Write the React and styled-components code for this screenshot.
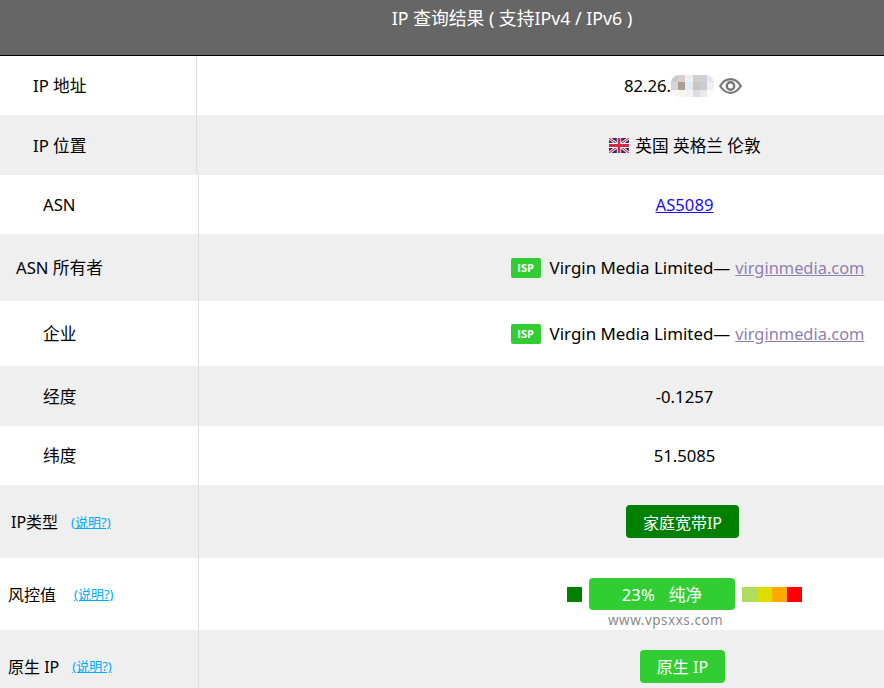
import React from "react";
import styled, { createGlobalStyle } from "styled-components";

const Global = createGlobalStyle`
  html, body { margin: 0; padding: 0; height: 688px; overflow: hidden; background: #fff; }
  body { font-family: "Noto Sans", "Noto Sans CJK SC", sans-serif; font-size: 16.7px; color: #000; }
`;

const Page = styled.div`
  width: 884px;
`;

const Header = styled.header`
  height: 55px;
  box-sizing: content-box;
  background: #666;
  border-bottom: 1px solid #000;
  color: #fff;
  font-size: 17.8px;
  line-height: 24px;
  padding-left: 140px;
  text-align: center;
  > span { display: block; padding-top: 6px; }
`;

const Row = styled.div`
  display: grid;
  grid-template-columns: ${(p) => p.$labelWidth}px 1fr;
  height: ${(p) => p.$height}px;
  background: ${(p) => (p.$shade ? "#efefef" : "#fff")};
`;

const Label = styled.div`
  display: flex;
  align-items: center;
  padding-left: ${(p) => p.$indent}px;
  padding-bottom: 1px;
  border-right: 1px solid #ddd;
  font-size: ${(p) => p.$size || 16.7}px;
  white-space: nowrap;
`;

const HelpLink = styled.a`
  margin-left: ${(p) => p.$gap}px;
  font-size: 13px;
  color: #00aaff;
  text-decoration: underline;
`;

const Value = styled.div`
  position: relative;
  display: flex;
  align-items: center;
  justify-content: center;
  padding-left: ${(p) => p.$pad || 286}px;
  white-space: nowrap;
`;

const PlainLink = styled.a`
  color: #1a0dee;
  text-decoration: underline;
`;

const Company = styled.span`
  font-size: 16.9px;
`;

const SiteLink = styled.a`
  margin-left: 5px;
  color: #8f7fb0;
  font-size: 16.4px;
  text-decoration: underline;
`;

const IspBadge = styled.span`
  width: 30px;
  height: 20px;
  margin-right: 9px;
  border-radius: 2px;
  background: #32cd32;
  color: #fff;
  font-family: "Open Sans", sans-serif;
  font-size: 11px;
  font-weight: 700;
  line-height: 20px;
  text-align: center;
`;

const Pill = styled.span`
  display: inline-flex;
  align-items: center;
  justify-content: center;
  width: ${(p) => p.$width}px;
  height: 33px;
  border-radius: 4px;
  background: ${(p) => p.$bg};
  color: #fff;
  font-size: 16px;
`;

const Square = styled.span`
  width: 15px;
  height: 15px;
  background: ${(p) => p.$bg};
`;

const Meter = styled.div`
  display: flex;
  align-items: center;
`;

const Scale = styled.div`
  display: flex;
  margin-left: 7px;
`;

const RiskBar = styled(Pill)`
  margin-left: 7px;
  height: 32px;
  gap: 14px;
  font-size: 16.7px;
`;

const Watermark = styled.span`
  position: absolute;
  left: 409px;
  top: 53px;
  color: #8a8a8a;
  font-size: 13.5px;
  letter-spacing: 0.5px;
`;

const Inline = styled.span`
  display: inline-flex;
  align-items: center;
  gap: ${(p) => p.$gap}px;
`;

const MosaicBox = styled.svg`
  display: block;
  border-radius: 8px;
`;

const Flag = () => (
  <svg width="20" height="15" viewBox="0 0 60 40" preserveAspectRatio="none">
    <rect width="60" height="40" fill="#1f2f70" />
    <path d="M0 0L60 40M60 0L0 40" stroke="#fff" strokeWidth="8" />
    <path d="M0 0L60 40M60 0L0 40" stroke="#d42a44" strokeWidth="3" />
    <path d="M30 0V40M0 20H60" stroke="#fff" strokeWidth="13" />
    <path d="M30 0V40M0 20H60" stroke="#d42a44" strokeWidth="8" />
  </svg>
);

const Eye = () => (
  <svg width="23" height="16" viewBox="0 0 23 16" fill="none" stroke="#787878">
    <path d="M1.200 8C4 3.500 7.500 1.200 11.500 1.200S19 3.500 21.800 8C19 12.500 15.500 14.800 11.500 14.800S4 12.500 1.200 8Z" strokeWidth="2.200" />
    <circle cx="11.500" cy="8" r="3.700" strokeWidth="2.400" />
  </svg>
);

const mosaic = [
  ["#c8ccd2", "#d8d0c8", "#ebf0f5", "#d5cec8", "#ccd0d8", "#e6e6ea"],
  ["#d4d4d6", "#ac9f92", "#e4ecf3", "#c8c4bf", "#c8cdd5", "#f0f0f2"],
  ["#f6f6f6", "#f7f5f2", "#f1f3f6", "#dcdcdc", "#e9e9e9", "#fbfbfb"],
];

const Mosaic = () => (
  <MosaicBox width="43" height="22" viewBox="0 0 6 3" shapeRendering="crispEdges">
    {mosaic.map((row, y) =>
      row.map((c, x) => <rect key={`${x}-${y}`} x={x} y={y} width="1" height="1" fill={c} />)
    )}
  </MosaicBox>
);

const CompanyValue = () => (
  <Value $pad={292}>
    <IspBadge>ISP</IspBadge>
    <Company>Virgin Media Limited—</Company>
    <SiteLink href="#">virginmedia.com</SiteLink>
  </Value>
);

export default function App() {
  return (
    <Page>
      <Global />
      <Header><span>IP 查询结果 ( 支持IPv4 / IPv6 )</span></Header>

      <Row $labelWidth={197} $height={59}>
        <Label $indent={33}>IP 地址</Label>
        <Value $pad={285}><Inline $gap={5}><Inline $gap={0}>82.26.<Mosaic /></Inline><Eye /></Inline></Value>
      </Row>
      <Row $labelWidth={197} $height={60} $shade>
        <Label $indent={33}>IP 位置</Label>
        <Value $pad={289}><Inline $gap={6}><Flag />英国 英格兰 伦敦</Inline></Value>
      </Row>
      <Row $labelWidth={199} $height={59}>
        <Label $indent={43}>ASN</Label>
        <Value><PlainLink href="#">AS5089</PlainLink></Value>
      </Row>
      <Row $labelWidth={199} $height={67} $shade>
        <Label $indent={16}>ASN 所有者</Label>
        <CompanyValue />
      </Row>
      <Row $labelWidth={199} $height={65}>
        <Label $indent={43}>企业</Label>
        <CompanyValue />
      </Row>
      <Row $labelWidth={199} $height={60} $shade>
        <Label $indent={43}>经度</Label>
        <Value>-0.1257</Value>
      </Row>
      <Row $labelWidth={199} $height={59}>
        <Label $indent={43}>纬度</Label>
        <Value>51.5085</Value>
      </Row>
      <Row $labelWidth={199} $height={73} $shade>
        <Label $indent={11} $size={16}>IP类型<HelpLink $gap={13} href="#">(说明?)</HelpLink></Label>
        <Value $pad={282}><Pill $width={113} $bg="#008000">家庭宽带IP</Pill></Value>
      </Row>
      <Row $labelWidth={199} $height={72}>
        <Label $indent={8} $size={16}>风控值<HelpLink $gap={18} href="#">(说明?)</HelpLink></Label>
        <Value>
          <Meter>
            <Square $bg="#008000" />
            <RiskBar $width={146} $bg="#32cd32"><span>23%</span><span>纯净</span></RiskBar>
            <Scale>
              <Square $bg="#b0dd5f" />
              <Square $bg="#dddd00" />
              <Square $bg="#ffaa00" />
              <Square $bg="#ff0000" />
            </Scale>
          </Meter>
          <Watermark>www.vpsxxs.com</Watermark>
        </Value>
      </Row>
      <Row $labelWidth={199} $height={72} $shade>
        <Label $indent={8} $size={16}>原生 IP<HelpLink $gap={13} href="#">(说明?)</HelpLink></Label>
        <Value $pad={282}><Pill $width={85} $bg="#32cd32">原生 IP</Pill></Value>
      </Row>
    </Page>
  );
}
